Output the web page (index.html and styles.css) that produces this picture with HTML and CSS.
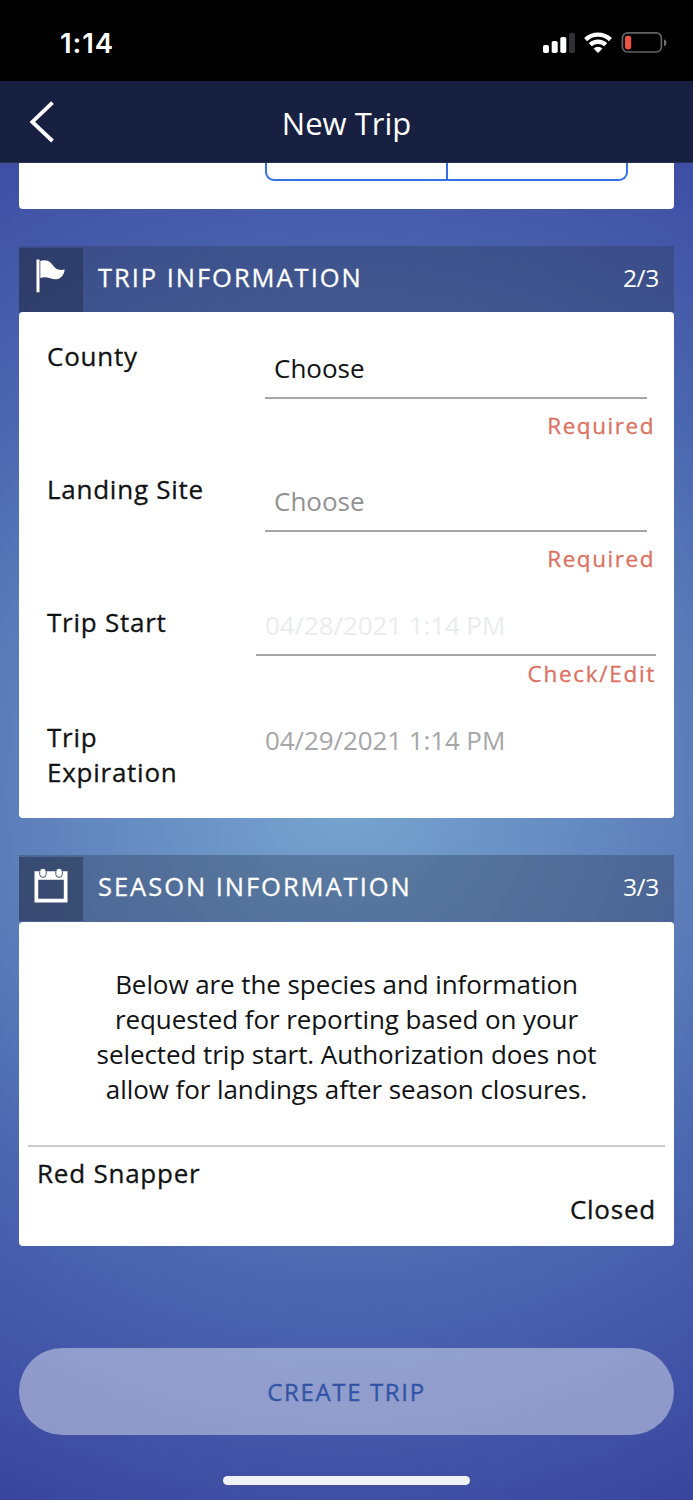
FILE: index.html
```html
<!DOCTYPE html>
<html lang="en">
<head>
<meta charset="utf-8">
<title>New Trip</title>
<link rel="stylesheet" href="styles.css">
</head>
<body>
<div class="screen">
  <div class="status">
    <span class="time">1:14</span>
    <svg class="status-icons" width="126" height="24" viewBox="0 0 126 24">
      <g fill="#fff">
        <rect x="1" y="14" width="6" height="8" rx="1.8"/>
        <rect x="9.7" y="10" width="6" height="12" rx="1.8"/>
        <rect x="18.3" y="6" width="6" height="16" rx="1.8"/>
        <rect x="27" y="1.7" width="6" height="20.3" rx="1.8" fill="#303132"/>
      </g>
      <g fill="none" stroke="#fff" stroke-width="4.3">
        <path d="M43.6 8.6a18 18 0 0 1 24.8 0"/>
        <path d="M48.3 13.8a11.2 11.2 0 0 1 15.4 0"/>
      </g>
      <path fill="#fff" d="M51.6 17.5a6.6 6.6 0 0 1 8.8 0L56 22z"/>
      <rect x="80.4" y="1.8" width="39" height="19.2" rx="5.2" fill="none" stroke="#626364" stroke-width="1.7"/>
      <rect x="83" y="4.8" width="6.2" height="13.6" rx="2.4" fill="#eb5545"/>
      <path fill="#707172" d="M122 8.2q2.6 1 2.6 3.5t-2.6 3.5z"/>
    </svg>
  </div>
  <header class="nav">
    <svg class="back" width="26" height="42" viewBox="0 0 26 42"><path d="M23.5 1.6 3.3 21l20.2 19" fill="none" stroke="#fff" stroke-width="3.8"/></svg>
    <h1 class="nav-title">New Trip</h1>
  </header>
  <main class="content">
    <section class="card card-top">
      <div class="segment"><span class="segment-half"></span><span class="segment-half"></span></div>
    </section>

    <div class="section-head trip-head">
      <span class="section-icon">
        <svg width="34" height="36" viewBox="0 0 34 36" fill="#fff"><path d="M2.5 1.5h3v32.7h-3zM6.300 3.100c3.200-1.400 7.900-1 10.400 1.700 2.500 2.600 4 5.800 7.500 6.700 2.200.6 4.400.5 6.500-.1-.7 5.200-3.500 9.300-8.200 9.900-4.800.6-9.300-3.400-16.200-1.400z"/></svg>
      </span>
      <h2 class="section-title">TRIP INFORMATION</h2>
      <span class="step">2/3</span>
    </div>
    <section class="card card-trip">
      <div class="row">
        <span class="label">County</span>
        <div class="field">
          <div class="select">Choose</div>
          <div class="error">Required</div>
        </div>
      </div>
      <div class="row">
        <span class="label">Landing Site</span>
        <div class="field">
          <div class="select muted">Choose</div>
          <div class="error">Required</div>
        </div>
      </div>
      <div class="row row-start">
        <span class="label">Trip Start</span>
        <div class="field">
          <div class="date-input">04/28/2021 1:14 PM</div>
          <div class="error error-tight">Check/Edit</div>
        </div>
      </div>
      <div class="row row-end">
        <span class="label">Trip<br>Expiration</span>
        <div class="field"><div class="date">04/29/2021 1:14 PM</div></div>
      </div>
    </section>

    <div class="section-head">
      <span class="section-icon">
        <svg width="34" height="36" viewBox="0 0 34 36"><path fill="#fff" fill-rule="evenodd" d="M.5 3.3h33v31.200H.5zM4.200 11.800v19h25.600v-19z"/><g fill="#fff" stroke="#465477" stroke-width="1"><rect x="5.700" y=".4" width="6.500" height="9" rx="3.200"/><rect x="21.800" y=".4" width="6.500" height="9" rx="3.200"/></g></svg>
      </span>
      <h2 class="section-title">SEASON INFORMATION</h2>
      <span class="step">3/3</span>
    </div>
    <section class="card card-season">
      <p class="note">Below are the species and information<br>requested for reporting based on your<br>selected trip start. Authorization does not<br>allow for landings after season closures.</p>
      <div class="species">
        <div class="species-name">Red Snapper</div>
        <div class="species-state">Closed</div>
      </div>
    </section>
    <button class="create" disabled>CREATE TRIP</button>
    <div class="home-bar"></div>
  </main>
</div>
</body>
</html>
```

FILE: styles.css
```css
* { box-sizing: border-box; }
body { margin: 0; font-family: "Open Sans", "Noto Sans", sans-serif; color: #111214; }
h1, h2, p { margin: 0; font-weight: 400; }
.screen {
  width: 693px; height: 1500px; overflow: hidden;
  display: flex; flex-direction: column;
  background: radial-gradient(circle 830px at 346px 790px, #78a5cf 0%, #5b7cb9 43%, #4b66b0 60%, #4051a5 83%, #37409a 100%);
}
.status {
  height: 81px; flex: none; background: #000; color: #fff;
  display: flex; justify-content: space-between; align-items: flex-start;
  padding: 31px 25px 0 60px;
}
.time { font: 600 27.5px/25px Inter, sans-serif; letter-spacing: 0.9px; }
.status-icons { flex: none; }
.nav {
  height: 82px; flex: none; background: #182042; color: #fff;
  border-bottom: 1px solid #29304c;
  display: grid; grid-template-columns: 60px 1fr 60px; align-items: center;
}
.back { margin-left: 29px; }
.nav-title { font-size: 31px; line-height: 42px; text-align: center; padding-top: 2px; }
.content { display: flex; flex-direction: column; padding: 0 19px; }
.card { background: #fff; border-radius: 4px; width: 655px; }
.card-top { height: 46px; border-radius: 0 0 4px 4px; margin-bottom: 37px; padding-left: 246px; }
.segment {
  width: 363px; height: 18px; display: flex;
  border: 2px solid #3270e4; border-top: 0; border-radius: 0 0 9px 9px;
}
.segment-half { flex: 1; }
.segment-half + .segment-half { border-left: 2px solid #3270e4; }
.section-head {
  height: 67px; width: 655px; padding: 2px 15px 1px 0; display: flex;
  background: rgba(43, 57, 83, 0.36); color: #fff;
}
.trip-head { height: 66px; padding-bottom: 0; }
.section-icon {
  width: 64px; height: 64px; background: rgba(30, 38, 65, 0.42);
  display: flex; justify-content: center; padding-top: 11px;
}
.trip-head .section-icon { padding-top: 10px; }
.section-title { flex: 1; margin-left: 15px; font-size: 25.5px; line-height: 58px; letter-spacing: 1.97px; -webkit-text-stroke: 0.3px; }
.trip-head .section-title { line-height: 58px; }
.step { font-size: 24.5px; line-height: 60px; letter-spacing: -0.3px; }
.card-trip { height: 506px; margin-bottom: 37px; padding: 27px 18px 0 28px; }
.row { height: 133px; display: grid; grid-template-columns: 218px 1fr; }
.row-start { height: 114.5px; }
.row-end { height: 71px; }
.label { font-size: 26px; line-height: 35px; letter-spacing: 0.75px; -webkit-text-stroke: 0.3px; }
.select {
  width: 382px; height: 60px; border-bottom: 2px solid #a6a6a6;
  padding: 12px 9px 0; font-size: 26px; line-height: 35px;
}
.muted { color: #929292; }
.error {
  margin: 11px 0 0; text-align: right; color: #dd7161; width: 390px;
  font-size: 22.5px; line-height: 31px; letter-spacing: 1.55px; -webkit-text-stroke: 0.3px;
}
.error-tight { margin-top: 2px; width: 391px; letter-spacing: 1.7px; }
.date-input {
  margin-left: -9px; width: 400px; height: 51px; padding: 3px 9px 0;
  border-bottom: 2px solid #a6a6a6; color: #ebecee;
  font-size: 26px; line-height: 35px; letter-spacing: -0.1px;
}
.date { padding-top: 3px; color: #a5a6a8; font-size: 26px; line-height: 35px; letter-spacing: -0.1px; }
.card-season { height: 324px; margin-bottom: 102px; padding: 45px 9px 0; }
.note { font-size: 26px; line-height: 35.1px; letter-spacing: -0.08px; text-align: center; height: 178px; white-space: nowrap; }
.species { border-top: 2px solid #cbcbcb; padding: 8px 9px 0; font-size: 26px; line-height: 36px; letter-spacing: 0.77px; -webkit-text-stroke: 0.3px; }
.species-state { text-align: right; }
.create {
  width: 655px; height: 87px; border: 0; border-radius: 44px; padding: 0;
  background: rgba(222, 226, 240, 0.5); color: #3153a6;
  font: 400 24px/86px "Open Sans", sans-serif; letter-spacing: 1.65px; -webkit-text-stroke: 0.3px;
}
.home-bar { width: 247px; height: 9px; border-radius: 5px; background: #f0f1f4; margin: 41px auto 0; }
```
